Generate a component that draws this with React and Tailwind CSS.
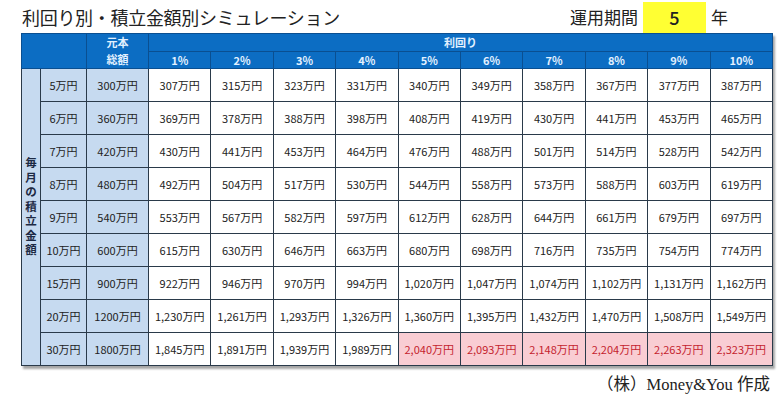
const rows = [
  ['5万円', '300万円', ['307', '315', '323', '331', '340', '349', '358', '367', '377', '387']],
  ['6万円', '360万円', ['369', '378', '388', '398', '408', '419', '430', '441', '453', '465']],
  ['7万円', '420万円', ['430', '441', '453', '464', '476', '488', '501', '514', '528', '542']],
  ['8万円', '480万円', ['492', '504', '517', '530', '544', '558', '573', '588', '603', '619']],
  ['9万円', '540万円', ['553', '567', '582', '597', '612', '628', '644', '661', '679', '697']],
  ['10万円', '600万円', ['615', '630', '646', '663', '680', '698', '716', '735', '754', '774']],
  ['15万円', '900万円', ['922', '946', '970', '994', '1,020', '1,047', '1,074', '1,102', '1,131', '1,162']],
  ['20万円', '1200万円', ['1,230', '1,261', '1,293', '1,326', '1,360', '1,395', '1,432', '1,470', '1,508', '1,549']],
  ['30万円', '1800万円', ['1,845', '1,891', '1,939', '1,989', '2,040', '2,093', '2,148', '2,204', '2,263', '2,323']],
]

const rates = ['1%', '2%', '3%', '4%', '5%', '6%', '7%', '8%', '9%', '10%']

export default function App() {
  return (
    <div className="w-[780px] h-[404px] bg-white text-[#222] overflow-hidden" style={{ fontFamily: '"Noto Sans CJK JP", "Noto Sans", sans-serif' }}>
      <div className="h-[33px] flex items-center pl-[22px] pr-[52px]">
        <h1 className="text-[18px] leading-none tracking-[-0.3px] mt-[1px]">利回り別・積立金額別シミュレーション</h1>
        <div className="ml-auto flex items-center self-stretch">
          <span className="text-[17px] leading-none mr-[5px]">運用期間</span>
          <div className="w-[63px] mt-[2px] self-stretch bg-[#ffff33] flex items-center justify-center text-[18px] font-medium">5</div>
          <span className="text-[17px] leading-none ml-[5px]">年</span>
        </div>
      </div>

      <table className="ml-[21px] w-[752px] table-fixed border-collapse border border-[#2a3a4a] text-[11px] text-center shadow-[2px_3px_2px_rgba(0,0,0,0.35)]">
        <colgroup>
          <col className="w-[19px]" />
          <col className="w-[46px]" />
          <col className="w-[62px]" />
          {rates.map(r => <col key={r} />)}
        </colgroup>
        <thead className="bg-[#0c6dc3] text-[#e3f1ff] font-bold">
          <tr className="h-[18px]">
            <th colSpan={2} rowSpan={2} className="border border-[#0a4f91]"></th>
            <th rowSpan={2} className="border border-[#0a4f91] leading-[17px] font-bold">
              <div>元本</div>
              <div>総額</div>
            </th>
            <th colSpan={10} className="border border-[#0a4f91] font-bold leading-none">利回り</th>
          </tr>
          <tr className="h-[17px]">
            {rates.map(r => (
              <th key={r} className="border border-[#0a4f91] font-bold leading-none">{r}</th>
            ))}
          </tr>
        </thead>
        <tbody>
          {rows.map((row, i) => (
            <tr key={row[0]} className="h-[33px]">
              {i === 0 && (
                <td rowSpan={9} className="bg-[#c6daf0] border border-[#2a3a4a] align-middle p-0">
                  <div className="flex flex-col items-center pb-[22px] text-[11.5px] font-bold text-[#1d2a44] leading-[14.5px]">
                    {'毎月の積立金額'.split('').map((c, k) => <span key={k}>{c}</span>)}
                  </div>
                </td>
              )}
              <td className="bg-[#c6daf0] border border-[#2a3a4a]">{row[0]}</td>
              <td className="bg-[#c6daf0] border border-[#2a3a4a]">{row[1]}</td>
              {row[2].map((v, j) => {
                const pink = i === 8 && j >= 4
                return (
                  <td key={j} className={pink ? 'bg-[#f9cdd3] text-[#c41e2e] border border-[#2a3a4a]' : 'border border-[#2a3a4a]'}>
                    {v}万円
                  </td>
                )
              })}
            </tr>
          ))}
        </tbody>
      </table>

      <div className="flex justify-end pr-[10px] mt-[11px] text-[16.5px] leading-none" style={{ fontFamily: '"Liberation Serif", "Noto Sans CJK JP", serif' }}>
        （株）Money&amp;You 作成
      </div>
    </div>
  )
}
